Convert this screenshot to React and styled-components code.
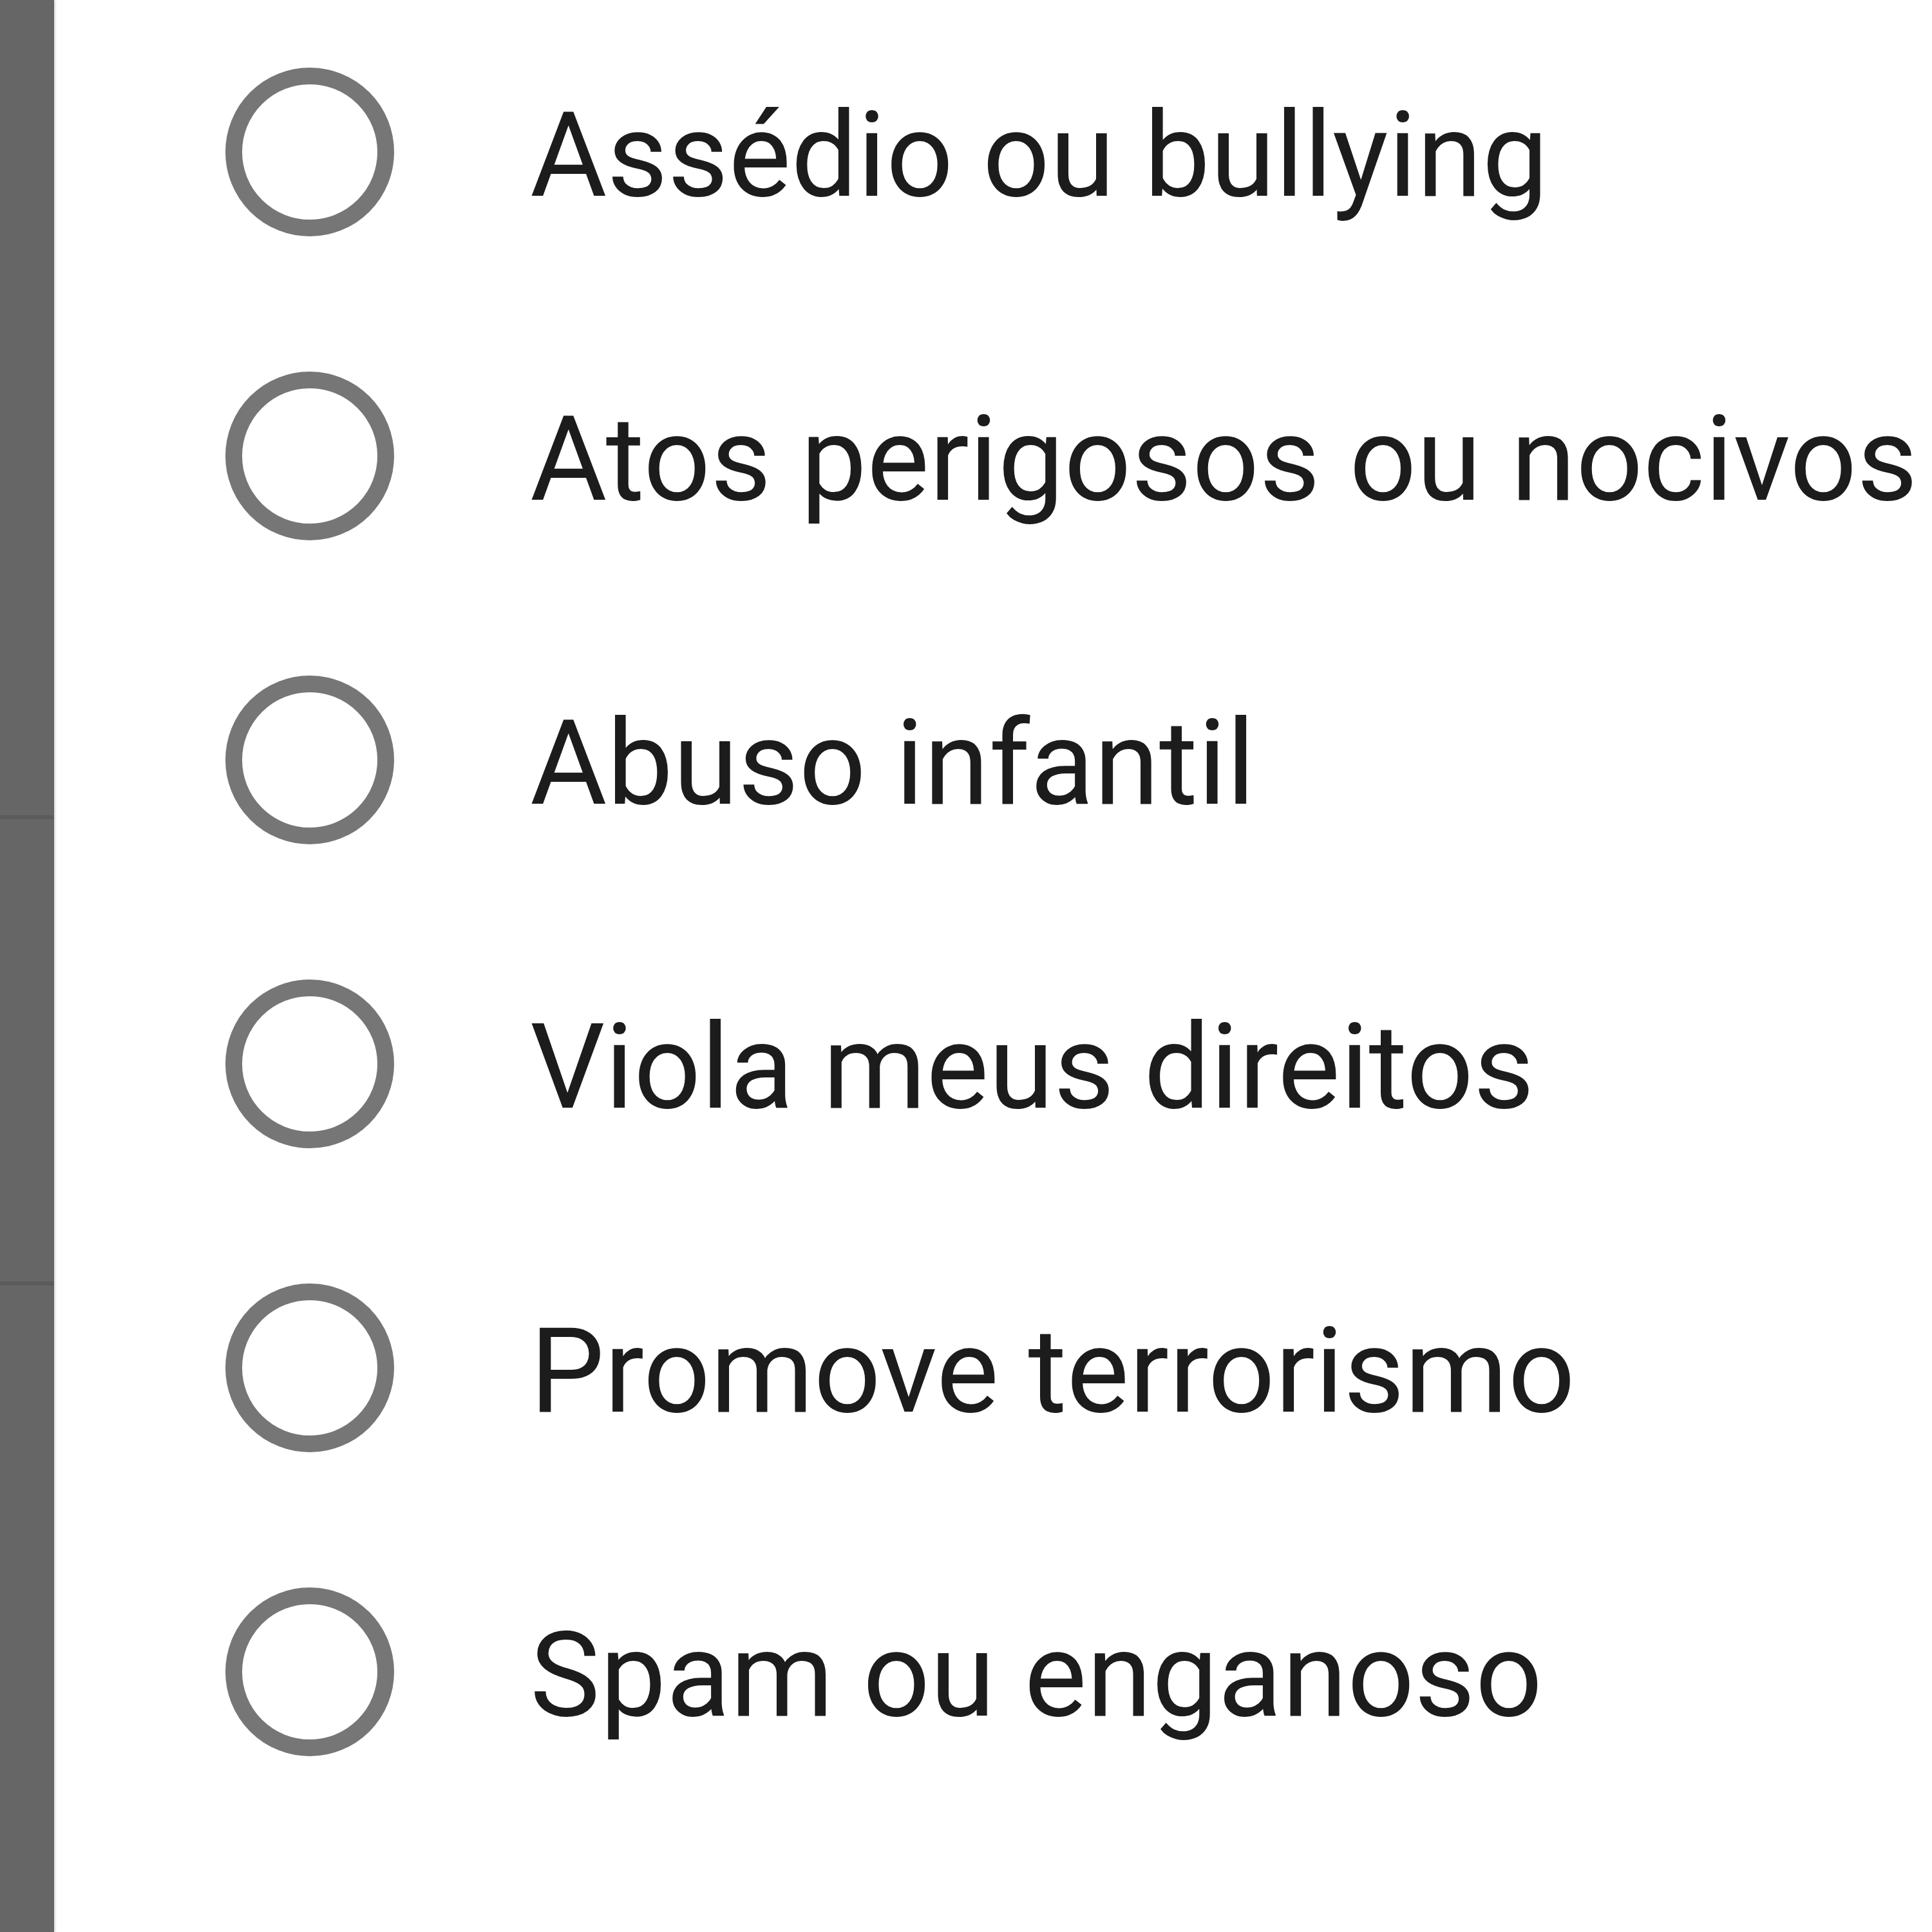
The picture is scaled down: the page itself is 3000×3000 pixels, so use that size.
import React, { useState } from "react";
import styled, { createGlobalStyle } from "styled-components";

const options = [
  "Assédio ou bullying",
  "Atos perigosos ou nocivos",
  "Abuso infantil",
  "Viola meus direitos",
  "Promove terrorismo",
  "Spam ou enganoso",
];

function App() {
  const [selected, setSelected] = useState(null);

  return (
    <>
      <GlobalStyle />
      <Screen>
        <Scrim>
          <BackdropItem $height={1266} />
          <BackdropItem $height={718} />
          <BackdropRest />
        </Scrim>
        <Sheet>
          {options.map((label, i) => (
            <Option key={label} onClick={() => setSelected(i)}>
              <Radio $checked={selected === i} />
              <Label>{label}</Label>
            </Option>
          ))}
        </Sheet>
      </Screen>
    </>
  );
}

export default App;

const GlobalStyle = createGlobalStyle`
  html, body {
    margin: 0;
    padding: 0;
    background: #ffffff;
  }
  body {
    font-family: Roboto, "Noto Sans", "Liberation Sans", sans-serif;
  }
`;

const Screen = styled.div`
  width: 3000px;
  height: 3000px;
  display: flex;
  background: #ffffff;
  overflow: hidden;
`;

const Scrim = styled.div`
  width: 84px;
  flex-shrink: 0;
  display: flex;
  flex-direction: column;
  background: #666666;
  box-shadow: 2px 0 3px rgba(0, 0, 0, 0.15);
`;

const BackdropItem = styled.div`
  height: ${(p) => p.$height}px;
  flex-shrink: 0;
  border-bottom: 6px solid #5b5b5b;
`;

const BackdropRest = styled.div`
  flex: 1;
`;

const Sheet = styled.div`
  flex: 1;
  display: flex;
  flex-direction: column;
  padding-left: 266px;
`;

const Option = styled.div`
  height: 472px;
  flex-shrink: 0;
  display: flex;
  align-items: center;
  cursor: pointer;
`;

const Radio = styled.span`
  width: 262px;
  height: 262px;
  box-sizing: border-box;
  border-radius: 50%;
  border: 26px solid ${(p) => (p.$checked ? "#1a73e8" : "#767676")};
  flex-shrink: 0;
  position: relative;

  &::after {
    content: "";
    display: ${(p) => (p.$checked ? "block" : "none")};
    position: absolute;
    inset: 36px;
    border-radius: 50%;
    background: #1a73e8;
  }
`;

const Label = styled.span`
  margin-left: 211px;
  padding-top: 12px;
  font-size: 183px;
  line-height: 1.17;
  color: #1c1c1c;
  white-space: nowrap;
`;
